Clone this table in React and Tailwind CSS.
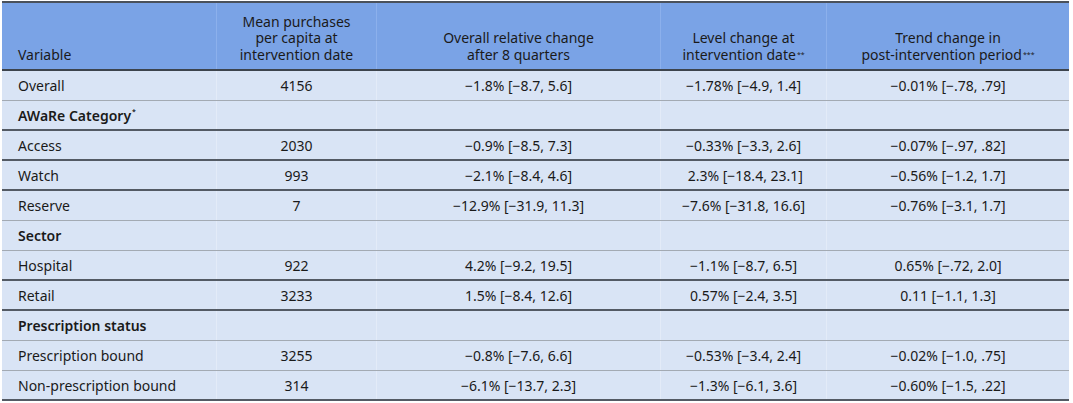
const rows = [
  { label: "Overall", vals: ["4156", "−1.8% [−8.7, 5.6]", "−1.78% [−4.9, 1.4]", "−0.01% [−.78, .79]"], line: "light" },
  { label: "AWaRe Category", sup: "*", bold: true, line: "dark" },
  { label: "Access", vals: ["2030", "−0.9% [−8.5, 7.3]", "−0.33% [−3.3, 2.6]", "−0.07% [−.97, .82]"], line: "dark" },
  { label: "Watch", vals: ["993", "−2.1% [−8.4, 4.6]", " 2.3% [−18.4, 23.1]", "−0.56% [−1.2, 1.7]"], line: "dark" },
  { label: "Reserve", vals: ["7", "−12.9% [−31.9, 11.3]", "−7.6% [−31.8, 16.6]", "−0.76% [−3.1, 1.7]"], line: "light" },
  { label: "Sector", bold: true, line: "light" },
  { label: "Hospital", vals: ["922", "4.2% [−9.2, 19.5]", "−1.1% [−8.7, 6.5]", "0.65% [−.72, 2.0]"], line: "dark" },
  { label: "Retail", vals: ["3233", "1.5% [−8.4, 12.6]", "0.57% [−2.4, 3.5]", "0.11 [−1.1, 1.3]"], line: "dark" },
  { label: "Prescription status", bold: true, line: "light" },
  { label: "Prescription bound", vals: ["3255", "−0.8% [−7.6, 6.6]", "−0.53% [−3.4, 2.4]", "−0.02% [−1.0, .75]"], line: "light" },
  { label: "Non-prescription bound", vals: ["314", "−6.1% [−13.7, 2.3]", "−1.3% [−6.1, 3.6]", "−0.60% [−1.5, .22]"], line: "dark" },
];

const cols = "grid grid-cols-[215px_160px_284px_166px_242px]";

function Sup({ children }) {
  return <sup className="text-[7px] relative -top-[3px] ml-px">{children}</sup>;
}

export default function App() {
  return (
    <div className="bg-white w-[1073px] h-[403px] pl-[2px] pt-[1px] font-['Noto_Sans',sans-serif] text-[14px] text-[#1a1a1a]">
      <div className="w-[1067px] border-t-2 border-[#4a515b] bg-[#d9e4f5]">
        {/* header */}
        <div className={`${cols} h-[68px] bg-[#7aa3e6] border-b-2 border-[#3d444d] leading-[16.5px]`}>
          <div className="flex items-end pl-4 pb-[6px] border-r border-[#8cb0ec]">Variable</div>
          <div className="flex items-end justify-center text-center pb-[6px] border-r border-[#8cb0ec]">
            Mean purchases
            <br />
            per capita at
            <br />
            intervention date
          </div>
          <div className="flex items-end justify-center text-center pb-[6px] border-r border-[#8cb0ec]">
            Overall relative change
            <br />
            after 8 quarters
          </div>
          <div className="flex items-end justify-center text-center pb-[6px] border-r border-[#8cb0ec]">
            <span>
              Level change at
              <br />
              intervention date<Sup>**</Sup>
            </span>
          </div>
          <div className="flex items-end justify-center text-center pb-[6px]">
            <span>
              Trend change in
              <br />
              post-intervention period<Sup>***</Sup>
            </span>
          </div>
        </div>

        {rows.map((r) => (
          <div
            key={r.label}
            className={`${cols} h-[30px] ${
              r.line === "dark" ? "border-b-2 border-[#535a64]" : "border-b border-[#a3aab3]"
            }`}
          >
            <div className={`flex items-center pl-4 border-r border-[#e3ebf8] ${r.bold ? "font-semibold" : ""}`}>
              {r.label}
              {r.sup && <Sup>{r.sup}</Sup>}
            </div>
            {[0, 1, 2, 3].map((i) => (
              <div
                key={i}
                className={`flex items-center justify-center whitespace-pre ${i < 3 ? "border-r border-[#e3ebf8]" : ""}`}
              >
                {r.vals ? r.vals[i] : ""}
              </div>
            ))}
          </div>
        ))}
      </div>
    </div>
  );
}
